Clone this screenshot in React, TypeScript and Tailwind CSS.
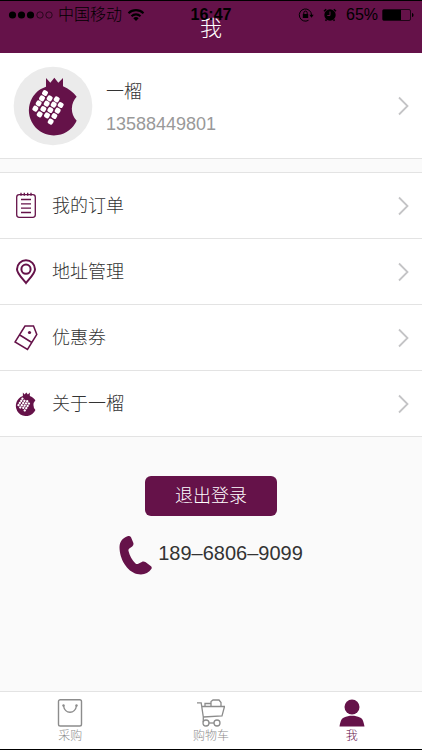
import type { ReactNode } from "react";

const SEEDS = [
  [135, 111], [126, 127], [116, 142], [106, 158],
  [149, 127], [140, 143], [130, 159], [119, 175],
  [170, 130], [161, 146], [151, 162], [141, 178],
  [182, 147], [173, 164], [163, 180], [152, 197],
];

const SEED_SIZE = 16;

function Pomegranate() {
  return (
    <g>
      <path
        fill="#651249"
        d="M138 92V66l13 14 12-15 12 15 14-14v25c17 7 31 18 41 31a52 52 0 0 0 0 72a75 75 0 1 1-92-102z"
      />
      {SEEDS.map(([x, y]) => (
        <rect
          key={`${x}-${y}`}
          x={x - SEED_SIZE / 2}
          y={y - SEED_SIZE / 2}
          width={SEED_SIZE}
          height={SEED_SIZE}
          rx="5"
          fill="#fff"
          transform={`rotate(30 ${x} ${y})`}
        />
      ))}
    </g>
  );
}

function Chevron() {
  return (
    <svg className="h-5 w-3 shrink-0" viewBox="0 0 12 20" fill="none" stroke="#c4c4c6" strokeWidth="1.800">
      <path d="M1 1.500 9.500 10 1 18.500" />
    </svg>
  );
}

const MENU: { label: string; icon: ReactNode }[] = [
  {
    label: "我的订单",
    icon: (
      <svg className="h-7 w-6" viewBox="0 0 24 28" fill="none" stroke="#651249" strokeWidth="1.300">
        <rect x="2.700" y="2.700" width="18.600" height="22.600" rx="2.500" />
        <path d="M7 .8v3M10.300.8v3M13.700.8v3M17 .8v3M7 7.500h10M7 11.800h10M7 16.200h10M7 20.500h10" />
      </svg>
    ),
  },
  {
    label: "地址管理",
    icon: (
      <svg className="h-7 w-6" viewBox="0 0 24 28" fill="none" stroke="#651249" strokeWidth="2">
        <path d="M12 25C8.500 20.500 3 15.500 3 11.200a9 9 0 0 1 18 0c0 4.300-5.500 9.300-9 13.800z" />
        <circle cx="12" cy="11.200" r="4.600" />
      </svg>
    ),
  },
  {
    label: "优惠券",
    icon: (
      <svg className="h-7 w-6" viewBox="0 0 24 28" fill="none" stroke="#651249" strokeWidth="1.500">
        <path d="M11 2h8.500l3.300 8.500L13.500 25.500 1 18zM5.800 11l12 7.500" />
        <circle cx="15.500" cy="8.500" r="1.600" fill="#651249" stroke="none" />
      </svg>
    ),
  },
  {
    label: "关于一榴",
    icon: (
      <svg className="h-6 w-6" viewBox="75 62 172 176">
        <Pomegranate />
      </svg>
    ),
  },
];

const TABS: { label: string; active?: boolean; icon: ReactNode }[] = [
  {
    label: "采购",
    icon: (
      <svg className="h-7 w-7" viewBox="0 0 28 28" fill="none" stroke="#8c8c8c" strokeWidth="1.400">
        <rect x="2.500" y="0.700" width="23" height="26.300" rx="1.800" />
        <path d="M7.500 6.500c1 9 12 9 13 0" />
        <circle cx="7.500" cy="6.500" r="1.200" fill="#8c8c8c" stroke="none" />
        <circle cx="20.500" cy="6.500" r="1.200" fill="#8c8c8c" stroke="none" />
      </svg>
    ),
  },
  {
    label: "购物车",
    icon: (
      <svg className="h-7 w-7" viewBox="0 0 28 28" fill="none" stroke="#8c8c8c" strokeWidth="1.300">
        <path d="M0 3.800h4.200L6.300 18v5M5 7.500h22.500L25 16.800 6.300 18M8 7V4.500h6M14 7V2.500L16 1h6l2 2.500V7" />
        <path d="M12 24h5" />
        <circle cx="9" cy="24" r="3" />
        <circle cx="20" cy="24" r="3" />
      </svg>
    ),
  },
  {
    label: "我",
    active: true,
    icon: (
      <svg className="h-7 w-7" viewBox="0 0 28 28" fill="#651249">
        <circle cx="14" cy="8" r="7.500" />
        <path d="M1.500 27.500c1-5.500 2-8 4.500-9 5-2.300 11-2.300 16 0 2.500 1 3.500 3.500 4.500 9z" />
      </svg>
    ),
  },
];

function StatusBar() {
  return (
    <div className="absolute inset-x-0 top-0 flex h-7 items-center px-2 text-base text-black">
      <div className="flex flex-1 items-center gap-1">
        <svg className="h-2 w-[46px]" viewBox="0 0 46 8">
          <circle cx="4.500" cy="4" r="3.600" />
          <circle cx="13.500" cy="4" r="3.600" />
          <circle cx="22.500" cy="4" r="3.600" />
          <circle cx="32" cy="4" r="3.200" fill="none" stroke="#000" strokeWidth="0.600" />
          <circle cx="41" cy="4" r="3.200" fill="none" stroke="#000" strokeWidth="0.600" />
        </svg>
        <span className="font-light">中国移动</span>
        <svg className="h-3 w-5" viewBox="0 0 20 12" fill="none" stroke="#000" strokeWidth="2.100">
          <path d="M2.500 4.200a10.800 10.800 0 0 1 15 0M5.500 7.200a6.500 6.500 0 0 1 9 0" />
          <path d="M10 12 7.300 9.300a4 4 0 0 1 5.400 0z" fill="#000" stroke="none" />
        </svg>
      </div>
      <span className="font-bold">16:47</span>
      <div className="flex flex-1 items-center justify-end">
        <svg className="mr-2 h-4 w-4" viewBox="0 0 16 16" fill="none" stroke="#000">
          <path d="M10.500 13.300A6.100 6.100 0 1 1 13.500 8" />
          <path d="M11.300 7.800h4.400l-2.200 3z" fill="#000" stroke="none" />
          <rect x="4.800" y="7" width="5.400" height="4" fill="#000" stroke="none" />
          <path d="M5.800 7V5.800a1.700 1.700 0 0 1 3.400 0V7" />
        </svg>
        <svg className="mr-2 h-4 w-4" viewBox="0 0 16 16">
          <circle cx="8" cy="8" r="5.700" />
          <path d="M2 4.200 4.200 2.200M11.800 2.200 14 4.200M4.500 12.500l-1 1.300M11.500 12.500l1 1.300" stroke="#000" strokeWidth="1.500" />
          <path d="M8 4.500V8.500H5.300" fill="none" stroke="#651249" />
        </svg>
        <span className="mr-1">65%</span>
        <svg className="h-3 w-8" viewBox="0 0 32 12">
          <rect x="0.500" y="0.500" width="28" height="11" rx="1.500" fill="none" stroke="#000" strokeWidth="0.700" />
          <rect x="1" y="1" width="18" height="10" />
          <path d="M30 4c2 0 2 4 0 4z" />
        </svg>
      </div>
    </div>
  );
}

export default function App() {
  return (
    <div className="flex min-h-screen flex-col border-b border-black bg-[#fafafa] font-['Liberation_Sans','Noto_Sans_CJK_SC',sans-serif] text-[#333]">
      <header className="relative h-[53px] border-t border-black bg-[#651249] pt-3 text-center">
        <h1 className="text-[22px] leading-8 font-light text-white">我</h1>
        <StatusBar />
      </header>

      <main className="flex-1">
        <a href="#profile" className="flex h-[106px] items-center border-b border-[#e3e3e3] bg-white pr-3 pl-[13px]">
          <svg className="h-20 w-20 shrink-0" viewBox="39 30 240 240">
            <circle cx="159" cy="150" r="118" fill="#ebebeb" />
            <Pomegranate />
          </svg>
          <div className="ml-[13px] flex-1 pt-1">
            <p className="text-lg leading-8 font-light">一榴</p>
            <p className="text-lg leading-8 text-[#999]">13588449801</p>
          </div>
          <Chevron />
        </a>

        <nav className="mt-[13px] border-t border-[#e3e3e3] bg-white">
          {MENU.map((item) => (
            <a
              key={item.label}
              href="#menu"
              className="flex h-[66px] items-center border-b border-[#e3e3e3] pr-3 pl-[14px]"
            >
              {item.icon}
              <span className="ml-[14px] flex-1 text-lg font-light">{item.label}</span>
              <Chevron />
            </a>
          ))}
        </nav>

        <div className="flex flex-col items-center pt-[39px]">
          <button type="button" className="h-10 w-[132px] rounded-md bg-[#651249] text-lg font-light text-white">
            退出登录
          </button>
          <a href="tel:18968069099" className="mt-[19px] flex items-center gap-1.5 text-xl">
            <svg className="h-10 w-[33px]" viewBox="0 0 33 40" fill="#651249">
              <path d="M8.500 1.200C10 .6 11.200 1 12 2.200l2.200 5.300c.6 1.700.3 3-1 4l-2.900 2.100c-.8.700-1 1.500-.8 2.500 1.200 5 3.500 9 7 12.300.9.800 1.800.9 2.800.4l3.500-1.900c1.200-.7 2.500-.6 3.600.2l5.300 3.800c1.200.9 1.300 2 .6 3.200C29.500 38.500 24 40.500 18 39 8 36.500.5 24 .5 12 .7 6.500 3.500 3 8.500 1.200z" />
            </svg>
            <span className="pb-1">189–6806–9099</span>
          </a>
        </div>
      </main>

      <nav className="grid h-[58px] grid-cols-3 border-t border-[#e3e3e3] bg-white">
        {TABS.map((tab) => (
          <a
            key={tab.label}
            href="#tab"
            className={`flex flex-col items-center pt-[7px] text-xs leading-[18px] font-light ${tab.active ? "text-[#651249]" : "text-[#8c8c8c]"}`}
          >
            {tab.icon}
            <span>{tab.label}</span>
          </a>
        ))}
      </nav>
    </div>
  );
}
